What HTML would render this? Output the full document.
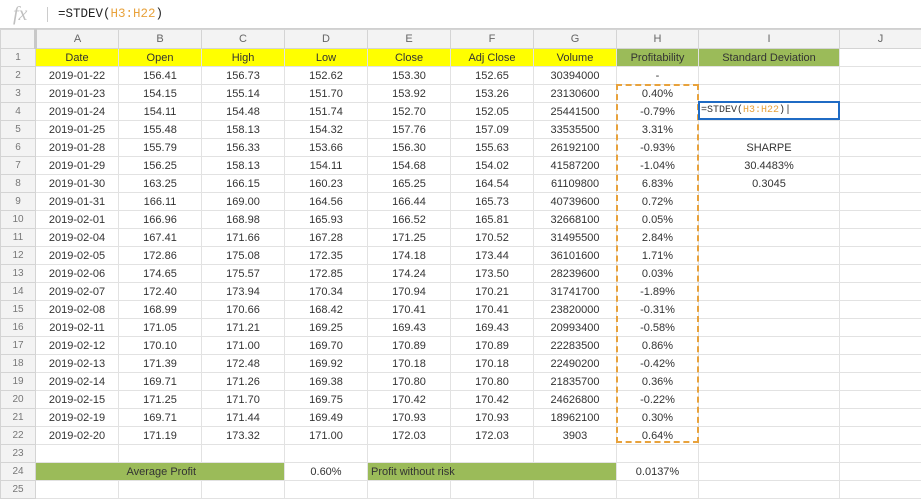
<!DOCTYPE html>
<html><head><meta charset="utf-8"><style>
*{margin:0;padding:0;box-sizing:border-box}
body{width:921px;height:485px;overflow:hidden;background:#fff;font-family:"Liberation Sans",Arial,sans-serif;font-size:11px;color:#333;position:relative}
.fb{position:absolute;left:0;top:0;width:921px;height:29px;border-bottom:1px solid #d0d0d0;background:#fff}
.fx{position:absolute;left:13px;top:3px;font-family:"Liberation Serif",serif;font-style:italic;font-size:20px;color:#c0c0c0}
.sep{position:absolute;left:47px;top:7px;width:1px;height:15px;background:#ccc}
.ft{position:absolute;left:58px;top:7px;font-family:"Liberation Mono",monospace;font-size:12.5px;color:#222}
.o{color:#e8a23c}
table{position:absolute;left:0;top:29px;width:921px;border-collapse:collapse;table-layout:fixed}
td{height:18px;border:1px solid #e2e2e2;text-align:center;white-space:nowrap;overflow:visible;padding:0;line-height:16px}
tr.h td{height:19px;background:#f3f3f3;color:#666;border-color:#d4d4d4}
td.n{background:#f3f3f3;color:#777;border-color:#d4d4d4;font-size:10px}
.y{background:#ffff00}
.g{background:#9bbb59}
td.l{text-align:left;padding-left:3px}
.dash{position:absolute;left:616px;top:84px;width:83px;height:359px;border:2px dashed #e8a23c}
.sel{position:absolute;left:698px;top:101px;width:142px;height:19px;border:2px solid #1f6bc4;background:#fff;font-family:"Liberation Mono",monospace;font-size:10px;line-height:15px;padding-left:1px}
</style></head><body>
<div class="fb"><span class="fx">fx</span><div class="sep"></div><div class="ft">=STDEV(<span class="o">H3:H22</span>)</div></div>
<table>
<colgroup><col style="width:35px"><col style="width:83px"><col style="width:83px"><col style="width:83px"><col style="width:83px"><col style="width:83px"><col style="width:83px"><col style="width:83px"><col style="width:82px"><col style="width:141px"><col style="width:82px"></colgroup>
<tr class="h"><td style="border-right:3px solid #c8c8c8"></td><td>A</td><td>B</td><td>C</td><td>D</td><td>E</td><td>F</td><td>G</td><td>H</td><td>I</td><td>J</td></tr>
<tr><td class="n">1</td><td class="y">Date</td><td class="y">Open</td><td class="y">High</td><td class="y">Low</td><td class="y">Close</td><td class="y">Adj Close</td><td class="y">Volume</td><td class="g">Profitability</td><td class="g">Standard Deviation</td><td></td></tr>
<tr><td class="n">2</td><td>2019-01-22</td><td>156.41</td><td>156.73</td><td>152.62</td><td>153.30</td><td>152.65</td><td>30394000</td><td>-</td><td></td><td></td></tr>
<tr><td class="n">3</td><td>2019-01-23</td><td>154.15</td><td>155.14</td><td>151.70</td><td>153.92</td><td>153.26</td><td>23130600</td><td>0.40%</td><td></td><td></td></tr>
<tr><td class="n">4</td><td>2019-01-24</td><td>154.11</td><td>154.48</td><td>151.74</td><td>152.70</td><td>152.05</td><td>25441500</td><td>-0.79%</td><td></td><td></td></tr>
<tr><td class="n">5</td><td>2019-01-25</td><td>155.48</td><td>158.13</td><td>154.32</td><td>157.76</td><td>157.09</td><td>33535500</td><td>3.31%</td><td></td><td></td></tr>
<tr><td class="n">6</td><td>2019-01-28</td><td>155.79</td><td>156.33</td><td>153.66</td><td>156.30</td><td>155.63</td><td>26192100</td><td>-0.93%</td><td>SHARPE</td><td></td></tr>
<tr><td class="n">7</td><td>2019-01-29</td><td>156.25</td><td>158.13</td><td>154.11</td><td>154.68</td><td>154.02</td><td>41587200</td><td>-1.04%</td><td>30.4483%</td><td></td></tr>
<tr><td class="n">8</td><td>2019-01-30</td><td>163.25</td><td>166.15</td><td>160.23</td><td>165.25</td><td>164.54</td><td>61109800</td><td>6.83%</td><td>0.3045</td><td></td></tr>
<tr><td class="n">9</td><td>2019-01-31</td><td>166.11</td><td>169.00</td><td>164.56</td><td>166.44</td><td>165.73</td><td>40739600</td><td>0.72%</td><td></td><td></td></tr>
<tr><td class="n">10</td><td>2019-02-01</td><td>166.96</td><td>168.98</td><td>165.93</td><td>166.52</td><td>165.81</td><td>32668100</td><td>0.05%</td><td></td><td></td></tr>
<tr><td class="n">11</td><td>2019-02-04</td><td>167.41</td><td>171.66</td><td>167.28</td><td>171.25</td><td>170.52</td><td>31495500</td><td>2.84%</td><td></td><td></td></tr>
<tr><td class="n">12</td><td>2019-02-05</td><td>172.86</td><td>175.08</td><td>172.35</td><td>174.18</td><td>173.44</td><td>36101600</td><td>1.71%</td><td></td><td></td></tr>
<tr><td class="n">13</td><td>2019-02-06</td><td>174.65</td><td>175.57</td><td>172.85</td><td>174.24</td><td>173.50</td><td>28239600</td><td>0.03%</td><td></td><td></td></tr>
<tr><td class="n">14</td><td>2019-02-07</td><td>172.40</td><td>173.94</td><td>170.34</td><td>170.94</td><td>170.21</td><td>31741700</td><td>-1.89%</td><td></td><td></td></tr>
<tr><td class="n">15</td><td>2019-02-08</td><td>168.99</td><td>170.66</td><td>168.42</td><td>170.41</td><td>170.41</td><td>23820000</td><td>-0.31%</td><td></td><td></td></tr>
<tr><td class="n">16</td><td>2019-02-11</td><td>171.05</td><td>171.21</td><td>169.25</td><td>169.43</td><td>169.43</td><td>20993400</td><td>-0.58%</td><td></td><td></td></tr>
<tr><td class="n">17</td><td>2019-02-12</td><td>170.10</td><td>171.00</td><td>169.70</td><td>170.89</td><td>170.89</td><td>22283500</td><td>0.86%</td><td></td><td></td></tr>
<tr><td class="n">18</td><td>2019-02-13</td><td>171.39</td><td>172.48</td><td>169.92</td><td>170.18</td><td>170.18</td><td>22490200</td><td>-0.42%</td><td></td><td></td></tr>
<tr><td class="n">19</td><td>2019-02-14</td><td>169.71</td><td>171.26</td><td>169.38</td><td>170.80</td><td>170.80</td><td>21835700</td><td>0.36%</td><td></td><td></td></tr>
<tr><td class="n">20</td><td>2019-02-15</td><td>171.25</td><td>171.70</td><td>169.75</td><td>170.42</td><td>170.42</td><td>24626800</td><td>-0.22%</td><td></td><td></td></tr>
<tr><td class="n">21</td><td>2019-02-19</td><td>169.71</td><td>171.44</td><td>169.49</td><td>170.93</td><td>170.93</td><td>18962100</td><td>0.30%</td><td></td><td></td></tr>
<tr><td class="n">22</td><td>2019-02-20</td><td>171.19</td><td>173.32</td><td>171.00</td><td>172.03</td><td>172.03</td><td>3903</td><td>0.64%</td><td></td><td></td></tr>
<tr><td class="n">23</td><td></td><td></td><td></td><td></td><td></td><td></td><td></td><td></td><td></td><td></td></tr>
<tr><td class="n">24</td><td class="g" style="border-right:none"></td><td class="g l" style="border-left:none;border-right:none;padding-left:8px">Average Profit</td><td class="g" style="border-left:none"></td><td>0.60%</td><td class="g l" style="border-right:none">Profit without risk</td><td class="g" style="border-left:none;border-right:none"></td><td class="g" style="border-left:none"></td><td>0.0137%</td><td></td><td></td></tr>
<tr><td class="n">25</td><td></td><td></td><td></td><td></td><td></td><td></td><td></td><td></td><td></td><td></td></tr>
</table>
<div class="dash"></div>
<div class="sel">=STDEV(<span class="o">H3:H22</span>)|</div>
</body></html>
